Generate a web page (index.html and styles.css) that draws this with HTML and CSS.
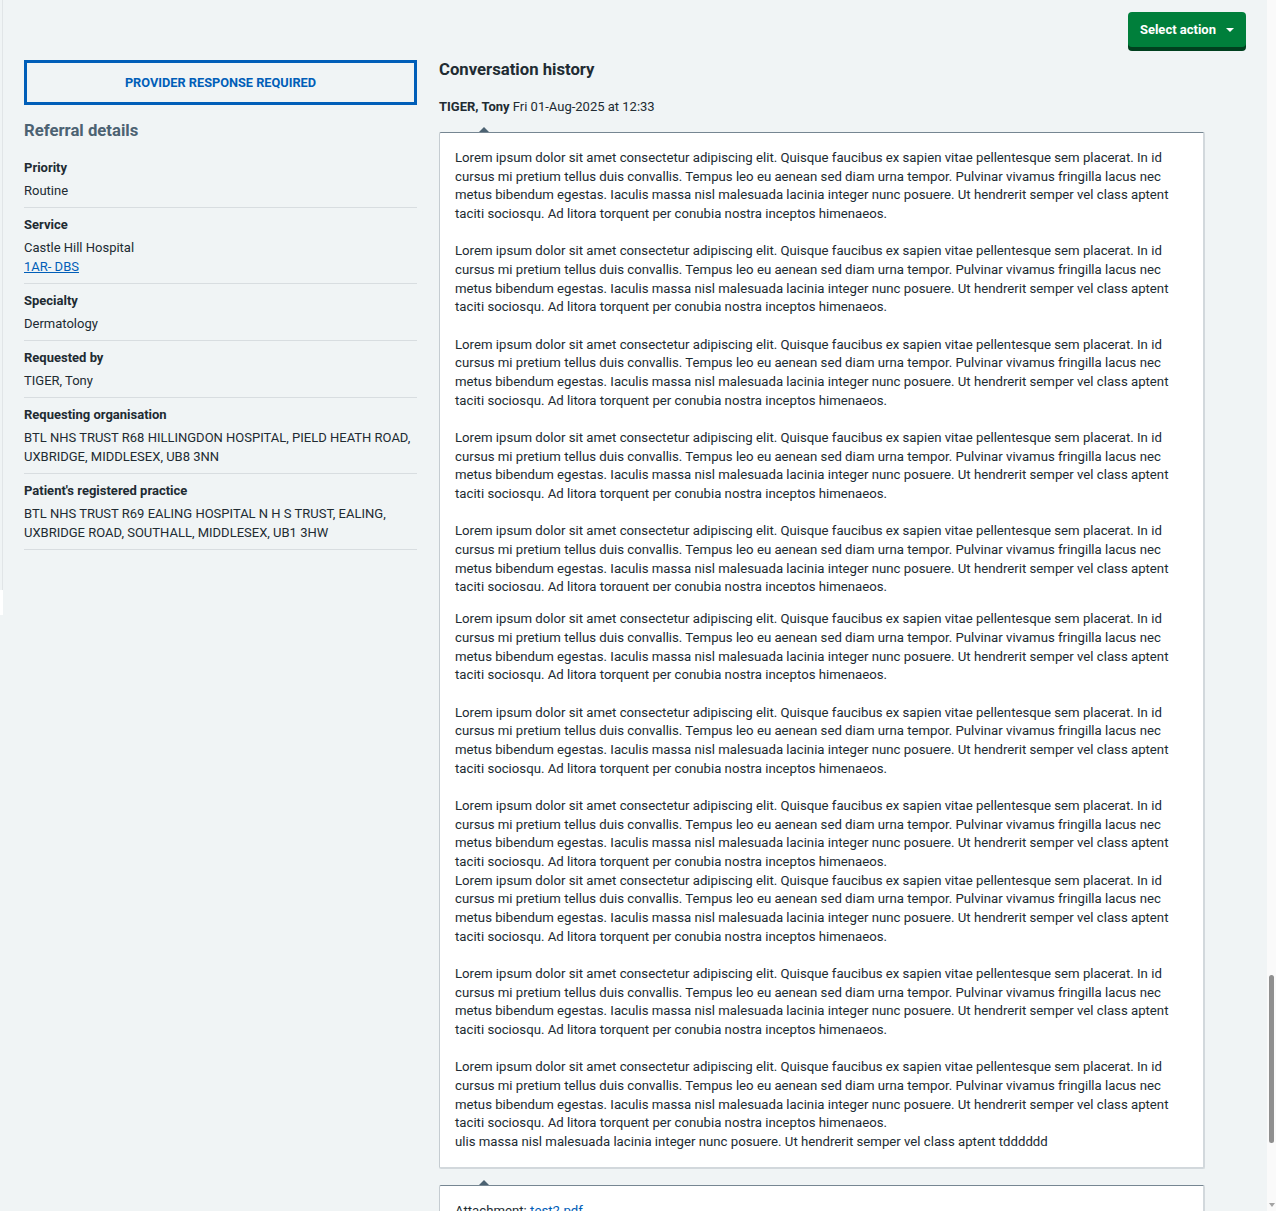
FILE: index.html
```html
<!DOCTYPE html>
<html>
<head>
	<meta name="viewport" content="width=device-width, initial-scale=1">
	<title>Referral - Conversation history</title>
	<link rel="stylesheet" href="styles.css">
</head>
<body>

<div class="screen">
	<div class="edge">
		<div class="edge-line"></div>
		<div class="edge-gap"></div>
	</div>

	<div class="page">
		<div class="toolbar">
			<button class="btn-action" type="button">Select action <span class="caret"></span></button>
		</div>

		<div class="columns">
			<aside class="referral">
				<div class="status-tag">PROVIDER RESPONSE REQUIRED</div>
				<h2 class="panel-title">Referral details</h2>

				<dl class="summary">
					<div class="summary-row">
						<dt>Priority</dt>
						<dd>Routine</dd>
					</div>
					<div class="summary-row">
						<dt>Service</dt>
						<dd>Castle Hill Hospital<br><a href="#">1AR- DBS</a></dd>
					</div>
					<div class="summary-row">
						<dt>Specialty</dt>
						<dd>Dermatology</dd>
					</div>
					<div class="summary-row">
						<dt>Requested by</dt>
						<dd>TIGER, Tony</dd>
					</div>
					<div class="summary-row">
						<dt>Requesting organisation</dt>
						<dd>BTL NHS TRUST R68 HILLINGDON HOSPITAL, PIELD HEATH ROAD, UXBRIDGE, MIDDLESEX, UB8 3NN</dd>
					</div>
					<div class="summary-row">
						<dt>Patient's registered practice</dt>
						<dd>BTL NHS TRUST R69 EALING HOSPITAL N H S TRUST, EALING, UXBRIDGE ROAD, SOUTHALL, MIDDLESEX, UB1 3HW</dd>
					</div>
				</dl>
			</aside>

			<main class="conversation">
				<h2 class="conversation-title">Conversation history</h2>
				<p class="msg-meta"><b>TIGER, Tony</b> Fri 01-Aug-2025 at 12:33</p>

				<div class="msg-box">
					<p>Lorem ipsum dolor sit amet consectetur adipiscing elit. Quisque faucibus ex sapien vitae pellentesque sem placerat. In id cursus mi pretium tellus duis convallis. Tempus leo eu aenean sed diam urna tempor. Pulvinar vivamus fringilla lacus nec metus bibendum egestas. Iaculis massa nisl malesuada lacinia integer nunc posuere. Ut hendrerit semper vel class aptent taciti sociosqu. Ad litora torquent per conubia nostra inceptos himenaeos.</p>
					<p>Lorem ipsum dolor sit amet consectetur adipiscing elit. Quisque faucibus ex sapien vitae pellentesque sem placerat. In id cursus mi pretium tellus duis convallis. Tempus leo eu aenean sed diam urna tempor. Pulvinar vivamus fringilla lacus nec metus bibendum egestas. Iaculis massa nisl malesuada lacinia integer nunc posuere. Ut hendrerit semper vel class aptent taciti sociosqu. Ad litora torquent per conubia nostra inceptos himenaeos.</p>
					<p>Lorem ipsum dolor sit amet consectetur adipiscing elit. Quisque faucibus ex sapien vitae pellentesque sem placerat. In id cursus mi pretium tellus duis convallis. Tempus leo eu aenean sed diam urna tempor. Pulvinar vivamus fringilla lacus nec metus bibendum egestas. Iaculis massa nisl malesuada lacinia integer nunc posuere. Ut hendrerit semper vel class aptent taciti sociosqu. Ad litora torquent per conubia nostra inceptos himenaeos.</p>
					<p>Lorem ipsum dolor sit amet consectetur adipiscing elit. Quisque faucibus ex sapien vitae pellentesque sem placerat. In id cursus mi pretium tellus duis convallis. Tempus leo eu aenean sed diam urna tempor. Pulvinar vivamus fringilla lacus nec metus bibendum egestas. Iaculis massa nisl malesuada lacinia integer nunc posuere. Ut hendrerit semper vel class aptent taciti sociosqu. Ad litora torquent per conubia nostra inceptos himenaeos.</p>
					<p class="clipped">Lorem ipsum dolor sit amet consectetur adipiscing elit. Quisque faucibus ex sapien vitae pellentesque sem placerat. In id cursus mi pretium tellus duis convallis. Tempus leo eu aenean sed diam urna tempor. Pulvinar vivamus fringilla lacus nec metus bibendum egestas. Iaculis massa nisl malesuada lacinia integer nunc posuere. Ut hendrerit semper vel class aptent taciti sociosqu. Ad litora torquent per conubia nostra inceptos himenaeos.</p>
					<p>Lorem ipsum dolor sit amet consectetur adipiscing elit. Quisque faucibus ex sapien vitae pellentesque sem placerat. In id cursus mi pretium tellus duis convallis. Tempus leo eu aenean sed diam urna tempor. Pulvinar vivamus fringilla lacus nec metus bibendum egestas. Iaculis massa nisl malesuada lacinia integer nunc posuere. Ut hendrerit semper vel class aptent taciti sociosqu. Ad litora torquent per conubia nostra inceptos himenaeos.</p>
					<p>Lorem ipsum dolor sit amet consectetur adipiscing elit. Quisque faucibus ex sapien vitae pellentesque sem placerat. In id cursus mi pretium tellus duis convallis. Tempus leo eu aenean sed diam urna tempor. Pulvinar vivamus fringilla lacus nec metus bibendum egestas. Iaculis massa nisl malesuada lacinia integer nunc posuere. Ut hendrerit semper vel class aptent taciti sociosqu. Ad litora torquent per conubia nostra inceptos himenaeos.</p>
					<p>Lorem ipsum dolor sit amet consectetur adipiscing elit. Quisque faucibus ex sapien vitae pellentesque sem placerat. In id cursus mi pretium tellus duis convallis. Tempus leo eu aenean sed diam urna tempor. Pulvinar vivamus fringilla lacus nec metus bibendum egestas. Iaculis massa nisl malesuada lacinia integer nunc posuere. Ut hendrerit semper vel class aptent taciti sociosqu. Ad litora torquent per conubia nostra inceptos himenaeos.<br>Lorem ipsum dolor sit amet consectetur adipiscing elit. Quisque faucibus ex sapien vitae pellentesque sem placerat. In id cursus mi pretium tellus duis convallis. Tempus leo eu aenean sed diam urna tempor. Pulvinar vivamus fringilla lacus nec metus bibendum egestas. Iaculis massa nisl malesuada lacinia integer nunc posuere. Ut hendrerit semper vel class aptent taciti sociosqu. Ad litora torquent per conubia nostra inceptos himenaeos.</p>
					<p>Lorem ipsum dolor sit amet consectetur adipiscing elit. Quisque faucibus ex sapien vitae pellentesque sem placerat. In id cursus mi pretium tellus duis convallis. Tempus leo eu aenean sed diam urna tempor. Pulvinar vivamus fringilla lacus nec metus bibendum egestas. Iaculis massa nisl malesuada lacinia integer nunc posuere. Ut hendrerit semper vel class aptent taciti sociosqu. Ad litora torquent per conubia nostra inceptos himenaeos.</p>
					<p>Lorem ipsum dolor sit amet consectetur adipiscing elit. Quisque faucibus ex sapien vitae pellentesque sem placerat. In id cursus mi pretium tellus duis convallis. Tempus leo eu aenean sed diam urna tempor. Pulvinar vivamus fringilla lacus nec metus bibendum egestas. Iaculis massa nisl malesuada lacinia integer nunc posuere. Ut hendrerit semper vel class aptent taciti sociosqu. Ad litora torquent per conubia nostra inceptos himenaeos.<br>ulis massa nisl malesuada lacinia integer nunc posuere. Ut hendrerit semper vel class aptent tdddddd</p>
				</div>

				<div class="msg-box">
					<p>Attachment: <a href="#">test2.pdf</a></p>
				</div>
			</main>
		</div>
	</div>

	<div class="scrollbar">
		<div class="scroll-thumb"></div>
		<div class="scroll-down"></div>
	</div>
</div>

</body>
</html>
```

FILE: styles.css
```css
* {
	box-sizing: border-box;
}

html, body {
	height: 100%;
	overflow: hidden;
}

body {
	margin: 0;
	font-family: Roboto, "Noto Sans", sans-serif;
	font-size: 13px;
	line-height: 19px;
	color: #212b32;
	background: #f0f4f5;
}

a {
	color: #005eb8;
}

.screen {
	display: flex;
	height: 100%;
}

/* Left edge of the frame */
.edge {
	width: 3px;
	flex-shrink: 0;
}

.edge-line {
	height: 590px;
	border-right: 1px solid #e1e5e7;
}

.edge-gap {
	height: 25px;
	background: white;
}

.page {
	flex: 1;
	min-width: 0;
	padding: 12px 21px 0 21px;
}

.toolbar {
	display: flex;
	justify-content: flex-end;
}

.btn-action {
	height: 35px;
	padding: 0 12px;
	border: 0;
	border-radius: 4px;
	font-family: inherit;
	font-size: 13px;
	font-weight: bold;
	color: white;
	background: #007f3b;
	box-shadow: 0 4px 0 #00401e;
	display: flex;
	align-items: center;
	gap: 10px;
}

.caret {
	width: 0;
	height: 0;
	border-left: 4px solid transparent;
	border-right: 4px solid transparent;
	border-top: 4px solid white;
}

.columns {
	display: flex;
	gap: 22px;
	margin-top: 13px;
}

/* Referral details (left) */
.referral {
	width: 393px;
	flex-shrink: 0;
}

.status-tag {
	height: 45px;
	border: 3px solid #005eb8;
	display: flex;
	align-items: center;
	justify-content: center;
	font-size: 12.75px;
	font-weight: bold;
	color: #005eb8;
}

.panel-title {
	margin: 15px 0 0;
	font-size: 16.7px;
	line-height: 22px;
	color: #4c6272;
}

.summary {
	margin: 9px 0 0;
}

.summary-row {
	padding: 7px 0 7px;
	border-bottom: 1px solid #d8dde0;
}

.summary dt {
	font-weight: bold;
	margin-bottom: 4px;
}

.summary dd {
	margin: 0;
}

/* Conversation (right) */
.conversation {
	width: 766px;
	flex-shrink: 0;
}

.conversation-title {
	margin: 0;
	font-size: 16.7px;
	line-height: 20px;
}

.msg-meta {
	margin: 17px 0 16px;
}

.msg-box {
	position: relative;
	background: white;
	border: 1px solid #c5ccd1;
	border-top-color: #768692;
	border-right: 2px solid #d2d8dc;
	border-bottom: 2px solid #d2d8dc;
	border-radius: 2px;
	padding: 16px 16px 15px 15px;
	margin-bottom: 16px;
	font-size: 13.2px;
	line-height: 18.67px;
}

/* little pointer above every message */
.msg-box::before {
	content: "";
	position: absolute;
	top: -6px;
	left: 39px;
	border-left: 5px solid transparent;
	border-right: 5px solid transparent;
	border-bottom: 5px solid #4c6272;
}

.msg-box p {
	margin: 0 0 18.67px;
}

.msg-box p:last-child {
	margin-bottom: 0;
}

.msg-box .clipped {
	max-height: 69px;
	overflow: hidden;
	margin-bottom: 19px;
}

/* fake scroll bar of the embedding frame */
.scrollbar {
	width: 9px;
	flex-shrink: 0;
	background: #fafafa;
	display: flex;
	flex-direction: column;
	align-items: center;
	padding-top: 975px;
}

.scroll-thumb {
	width: 5px;
	height: 168px;
	border-radius: 3px;
	background: #8f8f8f;
}

.scroll-down {
	margin-top: 60px;
	border-left: 3px solid transparent;
	border-right: 3px solid transparent;
	border-top: 4px solid #a3a3a3;
}
```
